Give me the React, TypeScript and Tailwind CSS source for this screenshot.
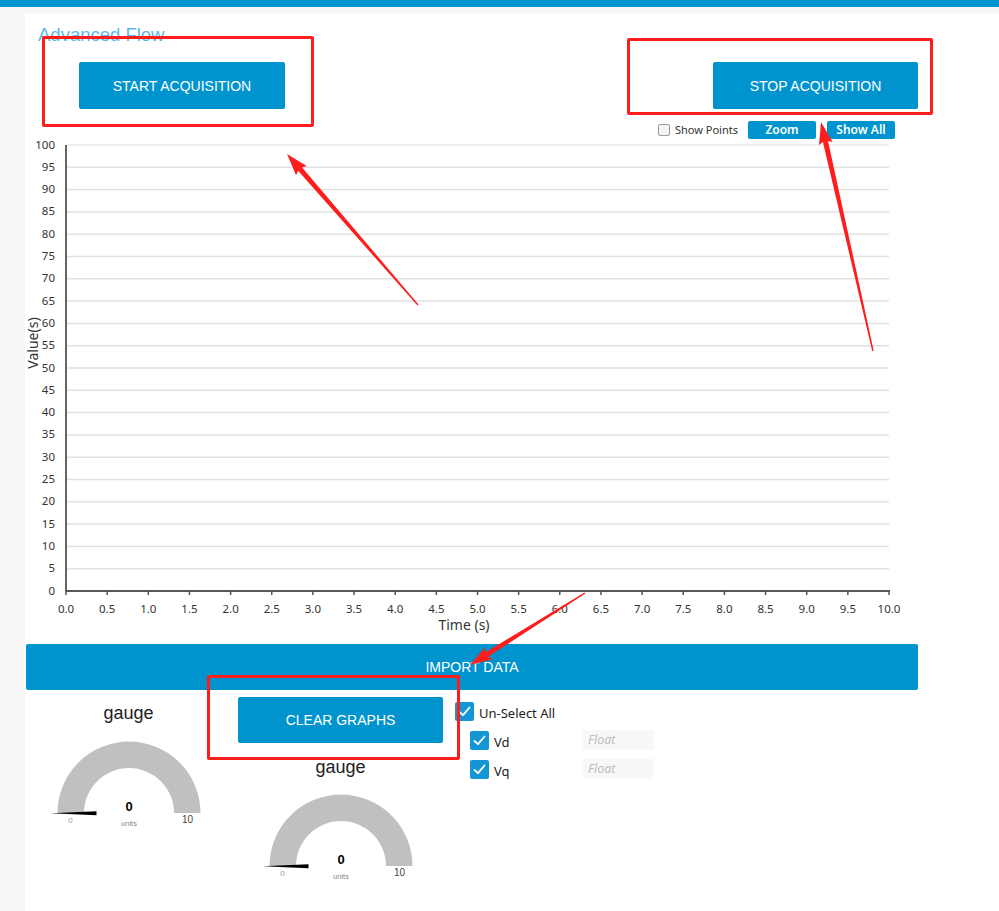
import React from "react";

function arrowPoints(tx: number, ty: number, px: number, py: number) {
  const dx = px - tx;
  const dy = py - ty;
  const L = Math.hypot(dx, dy);
  const ux = dx / L;
  const uy = dy / L;
  const nx = -uy;
  const ny = ux;
  const hl = 20;
  const bx = px - ux * hl;
  const by = py - uy * hl;
  const pts: [number, number][] = [
    [tx + nx * 0.7, ty + ny * 0.7],
    [bx + nx * 2.6, by + ny * 2.6],
    [bx - ux * 2 + nx * 7, by - uy * 2 + ny * 7],
    [px, py],
    [bx - ux * 2 - nx * 7, by - uy * 2 - ny * 7],
    [bx - nx * 2.6, by - ny * 2.6],
    [tx - nx * 0.7, ty - ny * 0.7],
  ];
  return pts.map((p) => `${p[0].toFixed(1)},${p[1].toFixed(1)}`).join(" ");
}

function Chart() {
  const yVals = Array.from({ length: 21 }, (_, i) => i * 5);
  const xVals = Array.from({ length: 21 }, (_, i) => i * 0.5);
  const yPos = (v: number) => 451 - v * 4.46;
  const xPos = (t: number) => 41 + t * 82.3;
  return (
    <svg
      width="893"
      height="500"
      overflow="visible"
      className="block overflow-visible"
      style={{ fontFamily: '"Noto Sans", "Open Sans", sans-serif' }}
    >
      {yVals
        .filter((v) => v > 0)
        .map((v) => (
          <line key={v} x1={42} x2={864} y1={yPos(v)} y2={yPos(v)} stroke={v === 100 ? "#e8e8e8" : "#e1e1e1"} strokeWidth={1.5} />
        ))}
      {yVals.map((v) => (
        <text key={v} x={30} y={yPos(v) + 0.5} textAnchor="end" dominantBaseline="middle" fontSize="11.5" fill="#333">
          {v}
        </text>
      ))}
      <line x1={41} x2={41} y1={5} y2={451} stroke="#666" strokeWidth={2} />
      <line x1={41} x2={865} y1={451} y2={451} stroke="#222" strokeWidth={1.5} />
      {xVals.map((t) => (
        <g key={t}>
          <line x1={xPos(t)} x2={xPos(t)} y1={451} y2={455} stroke="#555" strokeWidth={1.5} />
          <text x={xPos(t)} y={470} textAnchor="middle" dominantBaseline="middle" fontSize="11.5" fill="#333">
            {t.toFixed(1)}
          </text>
        </g>
      ))}
      <text x={439} y={486} textAnchor="middle" dominantBaseline="middle" fontSize="14" fill="#333">
        Time (s)
      </text>
      <text
        x={9}
        y={203}
        textAnchor="middle"
        dominantBaseline="middle"
        fontSize="14"
        fill="#333"
        transform="rotate(-90 9 203)"
      >
        Value(s)
      </text>
    </svg>
  );
}

function Gauge() {
  return (
    <svg width="160" height="95" className="block" style={{ fontFamily: '"Liberation Sans", Arial, sans-serif' }}>
      <path d="M 8.5 78 A 71.5 71.5 0 0 1 151.5 78 L 125 78 A 45 45 0 0 0 35 78 Z" fill="#c0c0c0" />
      <polygon points="1.5,78.3 47.5,76.3 47.5,80.3" fill="#000" />
      <text x={80} y={73} textAnchor="middle" dominantBaseline="middle" fontSize="13" fontWeight="bold" fill="#010101">
        0
      </text>
      <text x={80} y={89} textAnchor="middle" dominantBaseline="middle" fontSize="7.5" fill="#8a8a8a">
        units
      </text>
      <text x={21.5} y={86} textAnchor="middle" dominantBaseline="middle" fontSize="8" fill="#a09a9a">
        0
      </text>
      <text x={138.5} y={85} textAnchor="middle" dominantBaseline="middle" fontSize="10" fill="#444">
        10
      </text>
    </svg>
  );
}

function Check() {
  return (
    <span className="flex h-[19px] w-[19px] shrink-0 items-center justify-center rounded-[2px] bg-[#1496d4]">
      <svg width="13" height="11" viewBox="0 0 13 11">
        <path d="M1.5 6 L5 9.2 L11.5 1.5" fill="none" stroke="#fff" strokeWidth="1.8" strokeLinecap="round" strokeLinejoin="round" />
      </svg>
    </span>
  );
}

export default function App() {
  return (
    <div className="relative min-h-[911px] w-full overflow-hidden bg-[#f7f7f7] font-['Liberation_Sans',Arial,sans-serif]">
      <div className="h-[7px] bg-[#0094cf]" />
      <div className="pl-[25px] pt-[6px]">
        <main className="min-h-[898px] bg-white">
          <h1 className="pl-[13px] pt-[11px] text-[18.5px] leading-[22px] font-normal text-[#5cb9e8]">Advanced Flow</h1>

          <div className="mt-[16px] flex w-[893px]">
            <button className="ml-[54px] h-[47px] w-[206px] rounded-[2px] bg-[#0094cf] pt-[2px] text-[14px] text-white">
              START ACQUISITION
            </button>
            <button className="ml-auto h-[47px] w-[205px] rounded-[2px] bg-[#0094cf] pt-[2px] text-[14px] text-white">
              STOP ACQUISITION
            </button>
          </div>

          <div className="mt-[12px] flex h-[18px] w-[893px] items-center justify-end pr-[23px] font-['Noto_Sans','Open_Sans',sans-serif]">
            <span className="h-[12px] w-[12px] rounded-[2px] border border-[#9a9a9a] bg-[#f4f4f4]" />
            <span className="ml-[5px] text-[11px] leading-[18px] text-[#333]">Show Points</span>
            <button className="ml-[10px] h-[18px] w-[68px] rounded-[2px] bg-[#0094cf] text-[12px] font-semibold leading-[18px] text-white">
              Zoom
            </button>
            <button className="ml-[11px] h-[18px] w-[68px] rounded-[2px] bg-[#0094cf] text-[12px] font-semibold leading-[18px] text-white">
              Show All
            </button>
          </div>

          <div className="mt-[1px]">
            <Chart />
          </div>

          <div className="ml-[1px] mt-[4px] flex h-[46px] w-[892px] items-center justify-center rounded-[2px] bg-[#0094cf] text-[14px] text-white">
            IMPORT DATA
          </div>

          <div className="flex">
            <div className="flex w-[207px] flex-col items-center pt-[12px]">
              <div className="text-[18px] leading-[22px] text-[#222]">gauge</div>
              <div className="mt-[11px]">
                <Gauge />
              </div>
            </div>

            <div className="ml-[6px] flex w-[205px] flex-col items-center">
              <button className="mt-[7px] h-[46px] w-[205px] rounded-[2px] bg-[#0094cf] text-[14px] text-white">
                CLEAR GRAPHS
              </button>
              <div className="mt-[13px] text-[18px] leading-[22px] text-[#222]">gauge</div>
              <div className="mt-[10px]">
                <Gauge />
              </div>
            </div>

            <div className="ml-[12px] flex flex-col font-['Noto_Sans','Open_Sans',sans-serif] text-[13px] text-[#222]">
              <div className="mt-[12px] flex h-[19px] items-center">
                <Check />
                <span className="ml-[5px] pt-[3px] leading-[19px]">Un-Select All</span>
              </div>
              <div className="mt-[9px] flex h-[20px] items-center pl-[15px]">
                <Check />
                <span className="ml-[5px] w-[89px] pt-[4px] leading-[19px]">Vd</span>
                <span className="flex h-[20px] w-[71px] items-center bg-[#f8f8f8] pl-[5px] text-[12.5px] italic text-[#bdbdbd]">
                  Float
                </span>
              </div>
              <div className="mt-[9px] flex h-[20px] items-center pl-[15px]">
                <Check />
                <span className="ml-[5px] w-[89px] pt-[4px] leading-[19px]">Vq</span>
                <span className="flex h-[20px] w-[71px] items-center bg-[#f8f8f8] pl-[5px] text-[12.5px] italic text-[#bdbdbd]">
                  Float
                </span>
              </div>
            </div>
          </div>
        </main>
      </div>

      {/* annotation overlay */}
      <div className="pointer-events-none absolute left-[42px] top-[36px] h-[91px] w-[272px] rounded-[2px] border-[3px] border-[#ff1c1c]" />
      <div className="pointer-events-none absolute left-[627px] top-[38px] h-[77px] w-[306px] rounded-[2px] border-[3px] border-[#ff1c1c]" />
      <div className="pointer-events-none absolute left-[207px] top-[675px] h-[85px] w-[253px] rounded-[2px] border-[3px] border-[#ff1c1c]" />
      <svg className="pointer-events-none absolute left-0 top-0" width="999" height="911">
        <polygon points={arrowPoints(418, 305, 287, 154)} fill="#ff1c1c" />
        <polygon points={arrowPoints(873, 351, 821, 122)} fill="#ff1c1c" />
        <polygon points={arrowPoints(585, 593, 470, 665)} fill="#ff1c1c" />
      </svg>
    </div>
  );
}
